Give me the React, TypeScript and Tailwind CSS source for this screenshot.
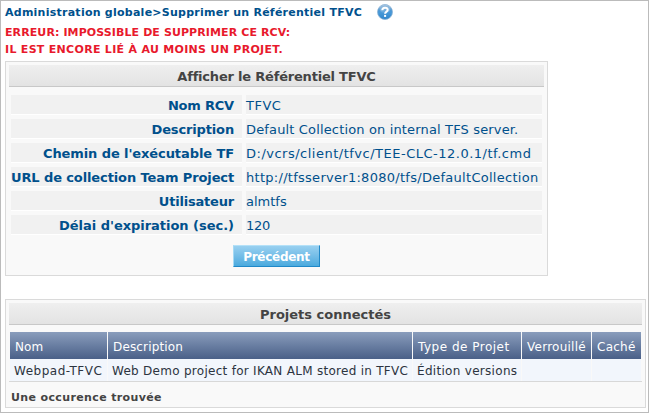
const fields = [
  { label: "Nom RCV", value: "TFVC", labelTrack: "tracking-[-0.2px]", valueTrack: "tracking-[0.5px]" },
  { label: "Description", value: "Default Collection on internal TFS server.", labelTrack: "tracking-[-0.15px]", valueTrack: "tracking-[0.15px]" },
  { label: "Chemin de l'exécutable TF", value: "D:/vcrs/client/tfvc/TEE-CLC-12.0.1/tf.cmd", labelTrack: "tracking-[-0.09px]", valueTrack: "tracking-[0.5px]" },
  { label: "URL de collection Team Project", value: "http://tfsserver1:8080/tfs/DefaultCollection", labelTrack: "tracking-[-0.11px]", valueTrack: "tracking-[0.28px]" },
  { label: "Utilisateur", value: "almtfs", labelTrack: "tracking-[-0.2px]", valueTrack: "tracking-normal" },
  { label: "Délai d'expiration (sec.)", value: "120", labelTrack: "tracking-[-0.03px]", valueTrack: "tracking-[-0.3px]" },
];

const columns = [
  { title: "Nom", cell: "Webpad-TFVC", titleTrack: "tracking-[0.1px]", cellTrack: "tracking-[0.5px]" },
  { title: "Description", cell: "Web Demo project for IKAN ALM stored in TFVC", titleTrack: "tracking-[0.15px]", cellTrack: "tracking-[0.28px]" },
  { title: "Type de Projet", cell: "Édition versions", titleTrack: "tracking-[0.5px]", cellTrack: "tracking-[0.3px]" },
  { title: "Verrouillé", cell: "", titleTrack: "tracking-[0.25px]", cellTrack: "" },
  { title: "Caché", cell: "", titleTrack: "tracking-[0.25px]", cellTrack: "" },
];

function HelpIcon() {
  return (
    <svg width="16" height="16" viewBox="0 0 16 16" className="ml-[15px] mt-[3px] shrink-0">
      <defs>
        <linearGradient id="help" x1="0" y1="0" x2="0" y2="1">
          <stop offset="0" stopColor="#3d80bd" />
          <stop offset="0.5" stopColor="#4a9ad8" />
          <stop offset="1" stopColor="#2f86cc" />
        </linearGradient>
        <linearGradient id="shine" x1="0" y1="0" x2="0" y2="1">
          <stop offset="0" stopColor="#fff" stopOpacity="0.5" />
          <stop offset="1" stopColor="#fff" stopOpacity="0.1" />
        </linearGradient>
      </defs>
      <circle cx="8" cy="8" r="7.500" fill="url(#help)" stroke="#8db4d6" strokeWidth="0.800" />
      <ellipse cx="8" cy="4.800" rx="5.800" ry="4" fill="url(#shine)" />
      <path d="M5.300 6.200C5.300 4.500 6.500 3.700 8 3.700s2.700.9 2.700 2.300C10.700 7.700 8.100 7.700 8.100 9.800" fill="none" stroke="#fff" strokeWidth="2" />
      <rect x="7.100" y="10.900" width="2" height="2" fill="#fff" />
    </svg>
  );
}

function PanelTitle({ text, track }: { text: string; track: string }) {
  return (
    <h2 className={`h-[22px] border-b border-[#c8c8c8] bg-linear-to-b from-[#efefef] to-[#e3e3e3] text-center text-[13px] leading-[24px] font-bold text-[#444] ${track}`}>
      {text}
    </h2>
  );
}

export default function App() {
  return (
    <div className="h-[413px] w-[649px] overflow-hidden border border-[#bbb] bg-white pl-1 font-['DejaVu_Sans',sans-serif] whitespace-nowrap">
      <header className="flex h-[22px] text-[11px] leading-[24px] font-bold tracking-[0.25px] text-[#00508c]">
        <h1>Administration globale&gt;Supprimer un Référentiel TFVC</h1>
        <HelpIcon />
      </header>
      <div className="h-[38px] pt-px text-[11px] leading-[17px] font-bold text-[#e8192c]">
        <p className="tracking-[0.1px]">ERREUR: IMPOSSIBLE DE SUPPRIMER CE RCV:</p>
        <p className="tracking-[0.3px]">IL EST ENCORE LIÉ À AU MOINS UN PROJET.</p>
      </div>

      <section className="h-[215px] w-[543px] border border-[#dadada] bg-[#f9f9f9] px-[3px] pt-[3px]">
        <PanelTitle text="Afficher le Référentiel TFVC" track="tracking-[-0.2px]" />
        <dl className="mt-2 mr-[2px] ml-[2px] grid grid-cols-[231px_296px] gap-x-1 gap-y-1 text-[13px] leading-[22px] text-[#00508c]">
          {fields.map((f) => (
            <div key={f.label} className="contents">
              <dt className={`h-5 border-b border-white bg-[#f1f1f1] pr-2 text-right font-bold ${f.labelTrack}`}>{f.label}</dt>
              <dd className={`h-5 border-b border-white bg-[#f1f1f1] ${f.valueTrack}`}>{f.value}</dd>
            </div>
          ))}
        </dl>
        <button className="mt-[10px] ml-[224px] block h-[22px] w-[87px] border border-t-[#b4e1f8] border-r-[#2088c8] border-b-[#2088c8] border-l-[#a5daf5] bg-linear-to-b from-[#98d0f0] to-[#4aaade] text-[12px] leading-[22px] font-bold tracking-[-0.28px] text-white">
          Précédent
        </button>
      </section>

      <section className="mt-[23px] h-[109px] w-[641px] border border-[#dadada] bg-[#f9f9f9] px-[3px] pt-[3px]">
        <PanelTitle text="Projets connectés" track="tracking-normal" />
        <div className="mt-[7px] border-b border-[#d8d8d8] px-px text-[12px]">
          <div className="grid grid-cols-[97px_304px_108px_69px_49px] gap-x-px">
            {columns.map((c) => (
              <div key={c.title}>
                <div className={`h-[27px] bg-linear-to-b from-[#8a9dbc] to-[#4a6088] pl-[5px] leading-[30px] text-white ${c.titleTrack}`}>{c.title}</div>
                <div className={`h-[22px] bg-[#f2f6fc] pl-[4px] leading-[25px] text-[#2c3440] ${c.cellTrack}`}>{c.cell}</div>
              </div>
            ))}
          </div>
        </div>
        <p className="pl-[2px] text-[11px] leading-[32px] font-bold tracking-[0.37px] text-[#444]">Une occurence trouvée</p>
      </section>
    </div>
  );
}
